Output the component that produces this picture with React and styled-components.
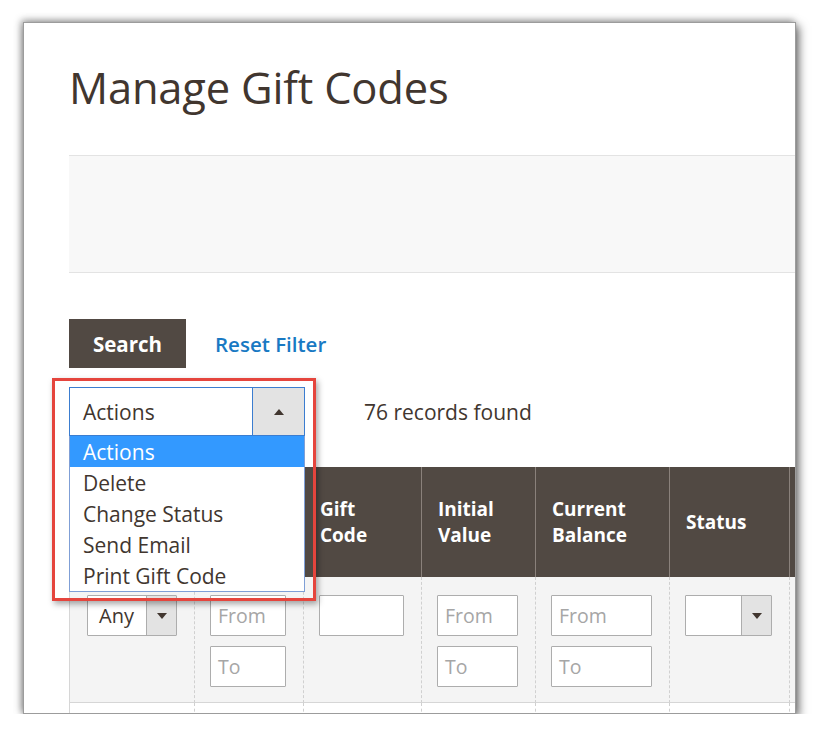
import React from 'react';
import styled, { createGlobalStyle } from 'styled-components';

const GlobalStyle = createGlobalStyle`
  html, body {
    margin: 0;
    padding: 0;
    background: #fff;
  }
  body {
    font-family: 'Open Sans', 'Liberation Sans', sans-serif;
    color: #41362f;
  }
`;

const Frame = styled.div`
  margin: 22px 0 0 23px;
  width: 773px;
  height: 692px;
  overflow: hidden;
  background: #fff;
  border: 1px solid #9c9c9c;
  box-sizing: border-box;
  box-shadow: 3px 4px 9px rgba(0, 0, 0, 0.55), -2px -2px 7px rgba(0, 0, 0, 0.35);
`;

const Content = styled.div`
  padding-left: 45px;
  width: 900px;
`;

const Title = styled.h1`
  margin: 0;
  padding-top: 40px;
  font-size: 43.5px;
  font-weight: 400;
  line-height: 50px;
  color: #41362f;
  letter-spacing: -0.2px;
`;

const Band = styled.div`
  margin-top: 42px;
  height: 116px;
  background: #f8f8f8;
  border-top: 1px solid #e3e3e3;
  border-bottom: 1px solid #e3e3e3;
`;

const SearchRow = styled.div`
  display: flex;
  align-items: center;
  gap: 29px;
  margin-top: 46px;
`;

const SearchButton = styled.button`
  width: 117px;
  height: 49px;
  border: 0;
  background: #514943;
  color: #fff;
  font-family: inherit;
  font-size: 20.5px;
  font-weight: 700;
  padding: 0;
`;

const ResetLink = styled.a`
  color: #1979c3;
  font-size: 20.5px;
  font-weight: 600;
  text-decoration: none;
`;

const ActionsRow = styled.div`
  display: flex;
  align-items: center;
  margin-top: 19px;
  gap: 59px;
`;

const ActionsWrap = styled.div`
  position: relative;
  width: 236px;
`;

const ActionsSelect = styled.div`
  display: flex;
  height: 49px;
  box-sizing: border-box;
  border: 1px solid #3b7dd0;
  background: #fff;
`;

const SelectLabel = styled.div`
  flex: 1;
  display: flex;
  align-items: center;
  padding-left: ${(p) => p.$pad || 13}px;
  font-size: ${(p) => p.$size || 21}px;
  color: #41362f;
`;

const ArrowBox = styled.div`
  width: ${(p) => p.$w}px;
  display: flex;
  align-items: center;
  justify-content: center;
  background: #e3e3e3;
  border-left: 1px solid ${(p) => p.$line};
`;

const Triangle = styled.span`
  width: 0;
  height: 0;
  border-left: 5px solid transparent;
  border-right: 5px solid transparent;
  ${(p) =>
    p.$up
      ? 'border-bottom: 6px solid #41362f;'
      : 'border-top: 6px solid #41362f;'}
`;

const OptionList = styled.ul`
  position: absolute;
  top: 49px;
  left: 0;
  width: 236px;
  box-sizing: border-box;
  margin: 0;
  padding: 0;
  list-style: none;
  background: #fff;
  border: 1px solid #7f9fd6;
  border-top: 0;
  z-index: 3;
`;

const Option = styled.li`
  height: 31px;
  line-height: 32px;
  padding-left: 13px;
  font-size: 21px;
  color: ${(p) => (p.$active ? '#fff' : '#41362f')};
  background: ${(p) => (p.$active ? '#3399ff' : '#fff')};
`;

const Highlight = styled.div`
  position: absolute;
  left: -17px;
  top: -9px;
  width: 264px;
  height: 223px;
  box-sizing: border-box;
  border: 3px solid #e5453d;
  box-shadow: 2px 3px 6px rgba(0, 0, 0, 0.35);
  z-index: 4;
  pointer-events: none;
`;

const Records = styled.span`
  font-size: 21px;
  color: #41362f;
`;

const Grid = styled.div`
  display: grid;
  grid-template-columns: 125px 109px 118px 114px 134px 120px 120px;
  margin-top: 31px;
`;

const HeadCell = styled.div`
  height: 110px;
  box-sizing: border-box;
  background: #514943;
  border-left: ${(p) => (p.$first ? '0' : '1px solid #8a817b')};
  display: flex;
  align-items: center;
  padding-left: 16px;
  color: #fff;
  font-size: 19px;
  font-weight: 700;
  line-height: 26px;
`;

const FilterCell = styled.div`
  height: 126px;
  box-sizing: border-box;
  background: #f4f4f4;
  border-left: ${(p) => (p.$first ? '1px solid #d6d6d6' : '1px dashed #d0d0d0')};
  border-bottom: 1px solid #d6d6d6;
  padding: 18px 17px 0 ${(p) => (p.$first ? 17 : 15)}px;
  display: flex;
  flex-direction: column;
  gap: 10px;
`;

const BodyCell = styled.div`
  height: 20px;
  background: #fff;
  border-left: ${(p) => (p.$first ? '1px solid #d6d6d6' : '1px dashed #d0d0d0')};
`;

const Input = styled.div`
  height: 41px;
  box-sizing: border-box;
  border: 1px solid #adadad;
  border-radius: 1px;
  background: #fff;
  display: flex;
  align-items: center;
  padding-left: 7px;
  font-size: 19.5px;
  color: #a6a6a6;
`;

const SmallSelect = styled.div`
  height: 41px;
  box-sizing: border-box;
  border: 1px solid #adadad;
  border-radius: 1px;
  background: #fff;
  display: flex;
`;

const Dropdown = ({ label }) => (
  <SmallSelect>
    <SelectLabel $pad={11} $size={20}>
      {label}
    </SelectLabel>
    <ArrowBox $w={29} $line="#adadad">
      <Triangle />
    </ArrowBox>
  </SmallSelect>
);

const headers = [[], [], ['Gift', 'Code'], ['Initial', 'Value'], ['Current', 'Balance'], ['Status'], []];

const options = ['Actions', 'Delete', 'Change Status', 'Send Email', 'Print Gift Code'];

const App = () => (
  <>
    <GlobalStyle />
    <Frame>
      <Content>
        <Title>Manage Gift Codes</Title>
        <Band />
        <SearchRow>
          <SearchButton>Search</SearchButton>
          <ResetLink>Reset Filter</ResetLink>
        </SearchRow>
        <ActionsRow>
          <ActionsWrap>
            <ActionsSelect>
              <SelectLabel>Actions</SelectLabel>
              <ArrowBox $w={51} $line="#3b7dd0">
                <Triangle $up />
              </ArrowBox>
            </ActionsSelect>
            <OptionList>
              {options.map((o, i) => (
                <Option key={o} $active={i === 0}>
                  {o}
                </Option>
              ))}
            </OptionList>
            <Highlight />
          </ActionsWrap>
          <Records>76 records found</Records>
        </ActionsRow>
        <Grid>
          {headers.map((h, i) => (
            <HeadCell key={i} $first={i === 0}>
              <div>
                {h.map((line) => (
                  <div key={line}>{line}</div>
                ))}
              </div>
            </HeadCell>
          ))}
          <FilterCell $first>
            <Dropdown label="Any" />
          </FilterCell>
          <FilterCell>
            <Input>From</Input>
            <Input>To</Input>
          </FilterCell>
          <FilterCell>
            <Input />
          </FilterCell>
          <FilterCell>
            <Input>From</Input>
            <Input>To</Input>
          </FilterCell>
          <FilterCell>
            <Input>From</Input>
            <Input>To</Input>
          </FilterCell>
          <FilterCell>
            <Dropdown label="" />
          </FilterCell>
          <FilterCell>
            <Input />
          </FilterCell>
          {headers.map((h, i) => (
            <BodyCell key={i} $first={i === 0} />
          ))}
        </Grid>
      </Content>
    </Frame>
  </>
);

export default App;
